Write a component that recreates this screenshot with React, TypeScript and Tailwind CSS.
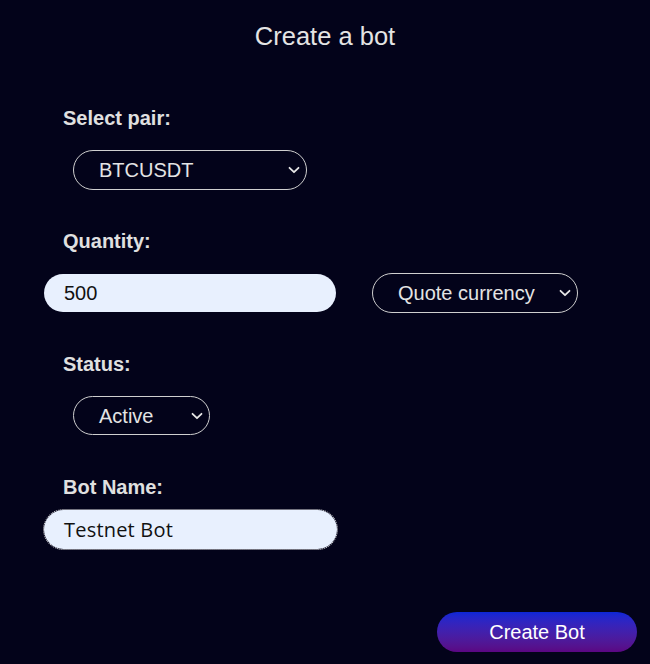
import React from "react";

function Chevron() {
  return (
    <svg width="12" height="8" viewBox="0 0 12 8" className="absolute right-[6px] top-1/2 -translate-y-1/2 pointer-events-none">
      <path d="M1.5 1.8 L6 6.2 L10.5 1.8" fill="none" stroke="#e6e6e6" strokeWidth="1.8" strokeLinecap="round" strokeLinejoin="round" />
    </svg>
  );
}

function Select({ value, width, height }: { value: string; width: string; height: string }) {
  return (
    <div className={`relative ${width} ${height} rounded-full border border-[#cfcfcf] flex items-center`}>
      <span className="pl-[25px] text-[20px] text-[#e4e4e4] leading-none">{value}</span>
      <Chevron />
    </div>
  );
}

export default function App() {
  return (
    <div
      className="w-[650px] min-h-[664px] bg-[#03031a] text-[#e2e2e2] flex flex-col"
      style={{ fontFamily: '"Liberation Sans", Arial, sans-serif' }}
    >
      <h1 className="text-center text-[25.5px] leading-[30px] pt-[21px] text-[#e4e4e4]">Create a bot</h1>

      <div className="mt-[56px] ml-[63px] text-[20px] font-bold leading-[22px] text-[#e0e0e0]">Select pair:</div>
      <div className="mt-[21px] ml-[73px]">
        <Select value="BTCUSDT" width="w-[234px]" height="h-[40px]" />
      </div>

      <div className="mt-[40px] ml-[63px] text-[20px] font-bold leading-[22px] text-[#e0e0e0]">Quantity:</div>
      <div className="mt-[21px] ml-[44px] flex items-center gap-[36px]">
        <div className="w-[292px] h-[38px] rounded-full bg-[#e8f0fe] flex items-center pl-[20px] text-[20px] text-[#111]">500</div>
        <Select value="Quote currency" width="w-[206px]" height="h-[40px]" />
      </div>

      <div className="mt-[40px] ml-[63px] text-[20px] font-bold leading-[22px] text-[#e0e0e0]">Status:</div>
      <div className="mt-[21px] ml-[73px]">
        <Select value="Active" width="w-[137px]" height="h-[39px]" />
      </div>

      <div className="mt-[41px] ml-[63px] text-[20px] font-bold leading-[22px] text-[#e0e0e0]">Bot Name:</div>
      <div className="mt-[12px] ml-[44px]">
        <div
          className="w-[293px] h-[39px] rounded-full bg-[#e8f0fe] outline outline-1 outline-dotted outline-[#e6e6e6] flex items-center pl-[20px] text-[20px] text-[#111]"
          style={{ fontFamily: '"Open Sans", sans-serif', letterSpacing: '0.2px' }}
        >
          Testnet Bot
        </div>
      </div>

      <div className="mt-[63px] flex justify-end pr-[13px]">
        <button className="w-[200px] h-[40px] rounded-full bg-gradient-to-b from-[#0b27d6] to-[#5b0683] text-white text-[20px] leading-none">
          Create Bot
        </button>
      </div>
    </div>
  );
}
